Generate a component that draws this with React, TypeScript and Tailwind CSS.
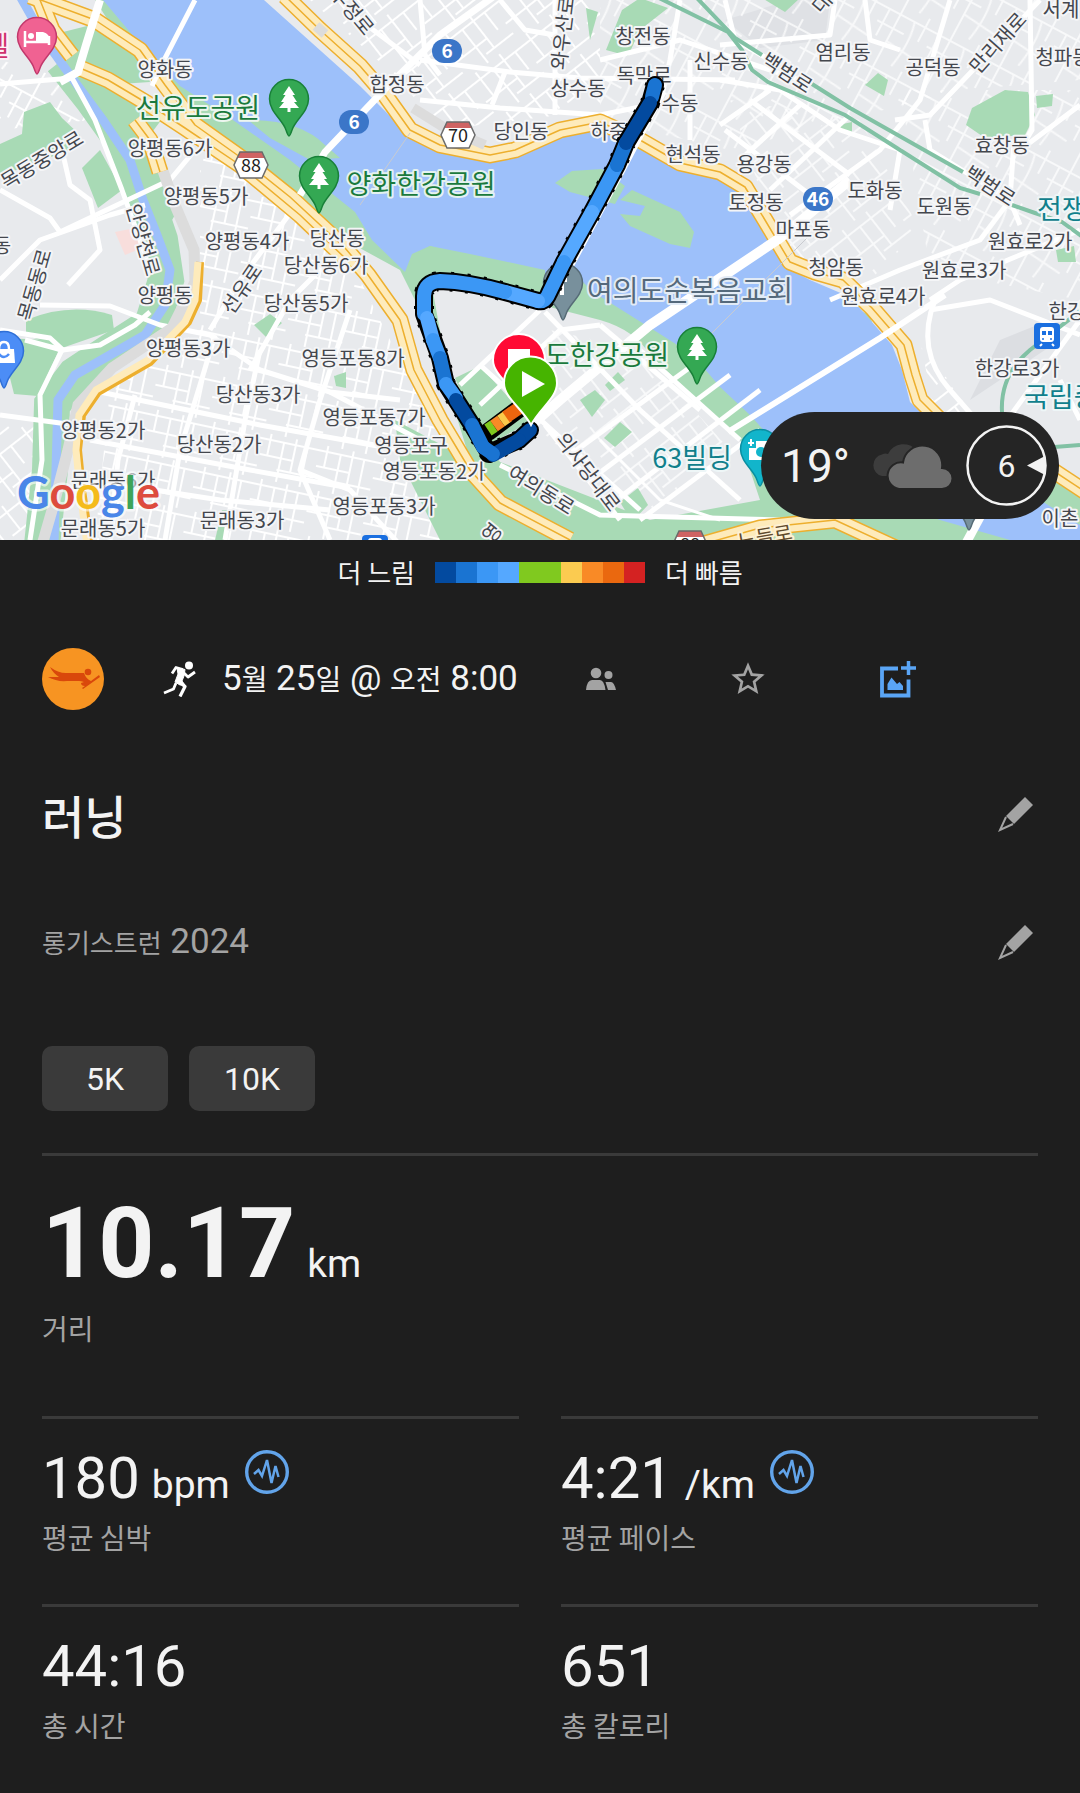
import React from 'react';
import { MdStarBorder } from 'react-icons/md';

type Label = { text: string; x: number; y: number; rotate?: number };

const DISTRICTS: Label[] = [
  { text: '양화동', x: 165, y: 77 },
  { text: '양평동6가', x: 170, y: 156 },
  { text: '양평동5가', x: 206, y: 204 },
  { text: '양평동4가', x: 247, y: 249 },
  { text: '당산동', x: 337, y: 246 },
  { text: '당산동6가', x: 326, y: 273 },
  { text: '양평동', x: 165, y: 303 },
  { text: '양평동3가', x: 188, y: 356 },
  { text: '당산동5가', x: 306, y: 311 },
  { text: '당산동3가', x: 258, y: 402 },
  { text: '영등포동8가', x: 353, y: 366 },
  { text: '양평동2가', x: 103, y: 438 },
  { text: '당산동2가', x: 219, y: 452 },
  { text: '문래동6가', x: 113, y: 488 },
  { text: '문래동5가', x: 103, y: 536 },
  { text: '문래동3가', x: 242, y: 528 },
  { text: '영등포동7가', x: 374, y: 425 },
  { text: '영등포구', x: 411, y: 453 },
  { text: '영등포동2가', x: 434, y: 479 },
  { text: '영등포동3가', x: 384, y: 514 },
  { text: '합정동', x: 397, y: 92 },
  { text: '당인동', x: 521, y: 139 },
  { text: '상수동', x: 578, y: 96 },
  { text: '창전동', x: 643, y: 44 },
  { text: '독막로', x: 644, y: 83 },
  { text: '수동', x: 680, y: 111 },
  { text: '하중', x: 609, y: 139 },
  { text: '현석동', x: 693, y: 162 },
  { text: '신수동', x: 721, y: 69 },
  { text: '염리동', x: 843, y: 60 },
  { text: '공덕동', x: 933, y: 75 },
  { text: '서계', x: 1061, y: 17 },
  { text: '청파동', x: 1063, y: 65 },
  { text: '효창동', x: 1002, y: 153 },
  { text: '용강동', x: 764, y: 172 },
  { text: '토정동', x: 756, y: 210 },
  { text: '마포동', x: 803, y: 237 },
  { text: '도화동', x: 875, y: 198 },
  { text: '도원동', x: 944, y: 214 },
  { text: '청암동', x: 836, y: 275 },
  { text: '원효로2가', x: 1030, y: 249 },
  { text: '원효로3가', x: 964, y: 278 },
  { text: '원효로4가', x: 883, y: 304 },
  { text: '한강', x: 1067, y: 319 },
  { text: '한강로3가', x: 1017, y: 376 },
  { text: '이촌', x: 1060, y: 526 },
  { text: '동', x: 2, y: 253 },
  { text: '목동중앙로', x: 42, y: 167, rotate: -31 },
  { text: '안양천로', x: 143, y: 247, rotate: 74 },
  { text: '목동동로', x: 35, y: 292, rotate: -74 },
  { text: '선유로', x: 242, y: 296, rotate: -56 },
  { text: '우정로', x: 352, y: 18, rotate: 50 },
  { text: '와우산로', x: 563, y: 40, rotate: -83 },
  { text: '백범로', x: 787, y: 80, rotate: 33 },
  { text: '백범로', x: 990, y: 193, rotate: 33 },
  { text: '만리재로', x: 998, y: 50, rotate: -48 },
  { text: '의사당대로', x: 588, y: 479, rotate: 53 },
  { text: '여의동로', x: 541, y: 497, rotate: 32 },
  { text: '대', x: 822, y: 10, rotate: -50 },
  { text: '영', x: 492, y: 540, rotate: -50 },
];

const ROUTE: { d: string; color: string }[] = [
  { d: 'M530 430L519 440', color: '#034a9f' },
  { d: 'M519 440L493 455', color: '#034a9f' },
  { d: 'M655 85L652 97', color: '#1a74d2' },
  { d: 'M617 165L592 212', color: '#3b97f5' },
  { d: 'M592 212L564 262', color: '#55a8ff' },
  { d: 'M564 262L549 293Q545 303 538 301', color: '#3b97f5' },
  { d: 'M626 143L617 165', color: '#1a74d2' },
  { d: 'M650 103L626 143', color: '#034a9f' },
  { d: 'M538 301L505 292', color: '#55a8ff' },
  { d: 'M505 292Q470 282 440 281Q424 282 424 296V314', color: '#3b97f5' },
  { d: 'M427 318L433 340', color: '#55a8ff' },
  { d: 'M433 340L440 358', color: '#3b97f5' },
  { d: 'M440 358L446 384', color: '#1a74d2' },
  { d: 'M446 384L456 398', color: '#3b97f5' },
  { d: 'M456 400L472 425', color: '#034a9f' },
  { d: 'M472 425L483 447', color: '#1a74d2' },
  { d: 'M483 447L493 454', color: '#1a74d2' },
];

const ROUTE_LINE =
  'M655 85L650 103L626 143L617 165L592 212L564 262L549 293Q545 303 538 301L505 292Q470 282 440 281Q424 282 424 296V314L440 358L446 384L472 425L489 453L519 440L530 430';

const HIGHWAYS = [
  'M30 -4L95 20L140 50L165 85L195 125L240 157L290 197L345 248L368 275L400 320L414 370L440 420L470 470L500 503L570 540',
  'M80 68L108 80L150 105L185 128L240 165L300 215L345 258',
  'M135 120L150 140L160 172',
  'M285 -4L320 30L360 66L385 95L410 130L440 145L490 155L515 150L560 130L600 122L640 140L680 163L720 172L745 187L765 220L790 262L815 272L843 280L872 308L904 345L912 375L920 400L950 430',
  'M40 0L52 30L72 56',
  'M1040 462L1090 495',
  'M700 545L760 528L835 520L900 550',
];

const STREETS = [
  'M0 84L72 78L95 120L122 190L140 240L150 270',
  'M0 190L50 218L60 232L170 180L195 150',
  'M0 280L40 240L110 215L145 205',
  'M62 150L70 185L90 200L100 250L68 285',
  'M0 330L50 338L63 350L100 345L135 325L150 312',
  'M25 340L62 350L40 395L42 460L30 540',
  'M40 305L110 306L160 325L210 335L260 370L330 392L400 400',
  'M0 415L75 425',
  'M100 392L260 425L400 450',
  'M90 440L250 470L350 488',
  'M90 480L220 500L330 510',
  'M215 335L200 385L180 450L165 540',
  'M350 310L320 400L300 470L330 540',
  'M260 350L245 420L225 540',
  'M210 330L240 280L300 200',
  'M250 370L290 300L350 240',
  'M135 395L118 460L110 540',
  'M300 470L350 490L400 545',
  'M330 392L420 440',
  'M340 0L360 20L420 65',
  'M420 60L510 72L580 78L735 80',
  'M420 100L500 108L600 115L650 105',
  'M505 72L492 105',
  'M420 0L425 55L440 75',
  'M500 0L525 30L555 35',
  'M555 0L555 115',
  'M680 0L670 60L662 95',
  'M600 60L680 40L800 80',
  'M690 60V140',
  'M720 45L830 35L835 0',
  'M720 80L780 90L840 130L900 150L890 210',
  'M720 125L770 90',
  'M740 160L800 105',
  'M770 190L850 115',
  'M790 215L880 150L920 100L950 0',
  'M725 130L830 210',
  'M750 100L850 175',
  'M895 120L930 115L1040 0',
  'M925 120L930 150L1010 200L1020 225',
  'M865 0L870 40L900 50',
  'M1030 0L1032 130L1020 150L1080 105',
  'M1014 140L1010 200L980 240L900 270L830 300',
  'M930 300L960 280L1080 230',
  'M930 310L990 300L1080 335',
  'M935 300Q915 350 950 390L985 430',
  'M1080 320L1000 430',
  'M1060 380L1080 420',
  'M725 0L735 40L770 60',
];

const YEOUIDO = [
  'M460 385L540 310',
  'M480 405L560 330L600 325',
  'M570 455L700 360',
  'M590 480L730 375',
  'M610 505L760 390',
  'M640 520L760 430',
  'M480 365L640 510',
  'M545 312L640 410L740 500',
  'M600 325L700 410',
  'M640 350L740 440',
  'M500 465L600 515L780 520',
  'M545 425L620 520',
];

const PARKS = [
  'M55 34L95 24L140 55L150 82L120 84L80 58Z',
  'M24 112L50 102L62 118L80 135L70 150L0 176V144L22 134Z',
  'M82 168L100 150L122 190L98 208Z',
  'M26 320Q70 302 112 315L114 330L62 348L26 335Z',
  'M0 338L50 340L58 352L38 396L14 394Z',
  'M254 325L270 314L282 323L266 337Z',
  'M606 50L622 10L640 -2L668 8L640 30L628 56Z',
  'M586 8L598 12L590 40Z',
  'M966 125L972 108L1005 90L1028 92L1035 115L1025 135L985 138Z',
  'M865 85L878 73L888 80L884 96Z',
  'M1036 96L1053 94L1052 106L1037 108Z',
  'M838 125L852 122L852 134L840 132Z',
  'M762 -2L800 -2L785 12Z',
  'M215 540L222 510L228 510L224 540Z',
  'M334 376L346 372L346 388L336 386Z',
  'M1056 250L1074 246L1076 262L1058 262Z',
];

const YEOUIDO_PARKS = [
  'M455 378L480 366L520 410L495 430L475 425Z',
  'M492 428L520 412L530 422L490 444Z',
  'M580 400L595 390L605 400L592 417Z',
  'M604 438L620 422L632 432L615 447Z',
  'M620 502L638 488L648 505L632 522Z',
  'M605 385L618 372L625 380L610 391Z',
];

/** Map label with the usual white halo */
const MapText = ({
  label,
  className = 'text-[20px] fill-[#44474e] stroke-[#f4f5f7]',
  anchor = 'middle',
}: {
  label: Label;
  className?: string;
  anchor?: 'start' | 'middle' | 'end';
}) => (
  <text
    x={label.x}
    y={label.y}
    textAnchor={anchor}
    transform={label.rotate ? `rotate(${label.rotate} ${label.x} ${label.y - 7})` : undefined}
    paintOrder="stroke"
    strokeWidth="4"
    strokeLinejoin="round"
    className={className}
  >
    {label.text}
  </text>
);

const PlacePin = ({
  x,
  y,
  fill,
  stroke,
  children,
}: {
  x: number;
  y: number;
  fill: string;
  stroke: string;
  children?: React.ReactNode;
}) => (
  <g transform={`translate(${x} ${y})`}>
    <path
      d="M0 37C-1 37 -2 34 -3 31C-6 21 -19.500 13 -19.500 0A19.500 19.500 0 0 1 19.500 0C19.500 13 6 21 3 31C2 34 1 37 0 37Z"
      fill={fill}
      stroke={stroke}
      strokeWidth="1.500"
    />
    {children}
  </g>
);

const TreePin = ({ x, y }: { x: number; y: number }) => (
  <PlacePin x={x} y={y} fill="#34a853" stroke="#188038">
    <path d="M0 -13L6 -4H3.500L8 3H5L10 9H1.500V13H-1.500V9H-10L-5 3H-8L-3.500 -4H-6Z" fill="#fff" />
  </PlacePin>
);

const RoundShield = ({ x, y, text }: Label) => (
  <g>
    <rect x={x - 15} y={y - 12} width="30" height="24" rx="12" fill="#3b76c8" />
    <text x={x} y={y + 7} textAnchor="middle" className="fill-white text-[19px] font-bold">
      {text}
    </text>
  </g>
);

const HexShield = ({ x, y, text }: Label) => (
  <g transform={`translate(${x} ${y})`}>
    <path d="M-11 -13H11L17 0L11 13H-11L-17 0Z" fill="#fff" />
    <path d="M-11 -13H11L14 -7H-14Z" fill="#cf6363" />
    <path d="M-11 -13H11L17 0L11 13H-11L-17 0Z" fill="none" stroke="#6b6b6b" strokeWidth="1.500" />
    <text y="7" textAnchor="middle" className="fill-[#222] text-[18px]">
      {text}
    </text>
  </g>
);

const RouteMap = () => (
  <svg
    viewBox="0 0 1080 540"
    role="img"
    aria-label="러닝 경로"
    className="block w-full font-['Noto_Sans_CJK_KR',sans-serif]"
  >
    <defs>
      <pattern id="blocksA" width="58" height="46" patternUnits="userSpaceOnUse" patternTransform="rotate(12)">
        <path d="M0 6H58M0 22H34M20 34H58M8 0V22M22 6V46M34 0V34M46 6V46" stroke="#fff" strokeWidth="2" fill="none" />
      </pattern>
      <pattern id="blocksB" width="64" height="50" patternUnits="userSpaceOnUse" patternTransform="rotate(-38)">
        <path d="M0 8H64M0 30H40M30 42H64M10 0V30M26 8V50M40 0V42M54 8V30" stroke="#fff" strokeWidth="2" fill="none" />
      </pattern>
      <pattern id="blocksC" width="56" height="60" patternUnits="userSpaceOnUse" patternTransform="rotate(28)">
        <path d="M0 10H56M0 26H30M18 40L56 44M6 10V40M18 0V60M34 10Q40 30 34 60M46 0V26" stroke="#fff" strokeWidth="2" fill="none" />
      </pattern>
    </defs>

    <rect width="1080" height="540" fill="#e8eaed" />
    <path d="M725 20L790 0H830L825 40L760 48Z" fill="#dfe1e5" />
    <path d="M1000 340L1050 320L1060 340L970 400Z" fill="#dcdee2" />
    <path d="M115 232L135 228L142 248L125 255Z" fill="#f8dedc" />

    {/* Side streets */}
    <path d="M200 140L350 260L440 440L470 540H95L110 390L200 330Z" fill="url(#blocksA)" />
    <path d="M0 60L70 80L90 120L0 130Z" fill="url(#blocksC)" />
    <path d="M0 420H40V540H0Z" fill="url(#blocksB)" />
    <path d="M310 0H600V110L440 130L400 80Z" fill="url(#blocksB)" />
    <path d="M600 0H1080V80L960 90L730 150L600 120Z" fill="url(#blocksC)" opacity="0.7" />
    <path d="M730 100L860 120L920 230L860 290L780 250Z" fill="url(#blocksB)" opacity="0.7" />
    <path d="M900 90H1080V300L930 270Z" fill="url(#blocksC)" opacity="0.7" />
    <path d="M920 340L990 440H940Z" fill="url(#blocksB)" />

    {/* Parks */}
    {PARKS.map((d) => (
      <path key={d} d={d} fill="#a8dab5" />
    ))}

    {/* Stream on the west side */}
    <path
      d="M62 60L92 98L122 140L145 195L160 240L166 280L152 325L110 352L75 375L52 405L50 470L42 545"
      fill="none"
      stroke="#a8dab5"
      strokeWidth="36"
    />
    <path d="M120 75L165 115L150 135L175 215L160 240L130 150L90 90Z" fill="#a8dab5" />
    <path
      d="M20 -4L45 40L75 82L103 120L130 160L143 200L157 235L170 270L165 305L145 335L110 355L75 375L58 400L56 470L54 545"
      fill="none"
      stroke="#9dc0fa"
      strokeWidth="9"
    />

    {/* River banks and the river */}
    <path
      d="M95 0H262L360 90L410 140L520 165L600 130L720 185L800 285L870 315L900 420L1080 490V540H440L400 460L395 420L470 460L430 330L400 270L345 240L230 150L140 70Z"
      fill="#a8dab5"
    />
    <path
      d="M103 0H264L360 86L382 108L412 138L430 146L480 158L512 156L560 134L600 128L640 150L690 172L720 177L740 192L765 232L785 267L810 280L850 297L892 345L902 370L910 402L960 450L1080 525V540H1010L940 520L800 470L750 415L720 387L693 355L660 334L593 292L573 272L545 276L450 252L430 246L412 254L405 272L372 240L355 212L290 160L230 118L180 86L145 50Z"
      fill="#9dc0fa"
    />
    <path
      d="M430 276Q470 282 538 304L600 320Q635 330 650 355L740 440L760 500L650 520L500 462L450 385Z"
      fill="#e8eaed"
    />
    <path d="M550 330L640 350L730 450L640 520L540 430Z" fill="url(#blocksB)" opacity="0.7" />
    {YEOUIDO_PARKS.map((d) => (
      <path key={d} d={d} fill="#a8dab5" />
    ))}
    <path d="M248 120Q300 120 325 145L340 158L310 160L270 138Z" fill="#a8dab5" />
    <path d="M555 183L572 171L602 169L625 186L615 204L570 192Z" fill="#a8dab5" />
    <path d="M620 200L632 190L680 212L694 232L690 248L670 244L630 226L620 214L640 216L645 206Z" fill="#a8dab5" />
    <path d="M413 255L430 246L470 254L545 270L545 292L470 272L430 270Z" fill="#a8dab5" />
    <path d="M600 440L660 500L720 520" fill="none" stroke="#fff" strokeWidth="3" />

    {/* Local roads */}
    <g fill="none" stroke="#fff" strokeWidth="5" strokeLinejoin="round">
      {STREETS.map((d) => (
        <path key={d} d={d} />
      ))}
      {YEOUIDO.map((d) => (
        <path key={d} d={d} />
      ))}
    </g>

    {/* Expressway along the stream */}
    <path
      d="M162 168L175 205L194 250L195 282L172 328L112 368L78 405L68 450L55 500L42 545"
      fill="none"
      stroke="#dcdcdc"
      strokeWidth="11"
    />
    <path
      d="M200 262L198 300L188 322L150 362L98 392L82 415L78 450L82 490L90 545"
      fill="none"
      stroke="#edaf2e"
      strokeWidth="8"
    />
    <path
      d="M198 262L195 300L185 322L148 360L96 390L79 415L76 450L80 490L87 545"
      fill="none"
      stroke="#feebbb"
      strokeWidth="7"
    />

    {/* Riverside highways */}
    <g fill="none" strokeLinejoin="round">
      {HIGHWAYS.map((d) => (
        <path key={d} d={d} stroke="#edaf2e" strokeWidth="17" />
      ))}
      {HIGHWAYS.map((d) => (
        <path key={d} d={d} stroke="#feebbb" strokeWidth="14" />
      ))}
      {HIGHWAYS.map((d) => (
        <path key={d} d={d} stroke="#edaf2e" strokeWidth="1.500" />
      ))}
      <path d="M316 26L325 34M413 108L445 128L485 145" stroke="#dcdcdc" strokeWidth="10" />
    </g>

    {/* Bridges */}
    <g fill="none" stroke="#fff">
      <path d="M100 0L86 45L78 72L60 82" strokeWidth="8" />
      <path d="M195 0L163 62L152 86" strokeWidth="5" />
      <path d="M500 -8L440 35L384 90L325 152L300 195" strokeWidth="7" />
      <path d="M660 90L618 170L575 250L545 305" strokeWidth="14" />
      <path d="M850 180L780 238L650 325L560 400L528 428" strokeWidth="10" />
      <path d="M728 432L880 338L945 295" strokeWidth="6" />
      <path d="M1000 480L965 545" strokeWidth="9" />
      <path d="M410 133L360 205M810 235L700 345" stroke="#c9cbd0" strokeWidth="1" />
    </g>

    {/* Railways */}
    <g fill="none" stroke="#81c1a4" strokeWidth="4">
      <path d="M695 -4L735 38L762 55M812 84L850 108L963 172M1012 205L1035 213L1062 222L1084 238" />
      <path d="M655 -4L728 32L742 50L752 70L768 82L845 115L900 150L960 188L980 194" />
      <path d="M1084 308L1030 350Q1000 375 1002 412L1015 450L1080 445" />
    </g>

    {DISTRICTS.map((label) => (
      <MapText key={`${label.text}-${label.x}`} label={label} />
    ))}
    <MapText
      label={{ text: '노들로', x: 765, y: 544, rotate: -10 }}
      className="text-[20px] fill-[#5f4a2c] stroke-[#fdf1d3]"
    />

    <MapText
      label={{ text: '선유도공원', x: 198, y: 118 }}
      className="text-[27px] fill-[#1a7a3d] stroke-[#edf6f0]"
    />
    <MapText
      label={{ text: '양화한강공원', x: 421, y: 194 }}
      className="text-[27px] fill-[#1a7a3d] stroke-[#e4f2f0]"
    />
    <MapText
      label={{ text: '도한강공원', x: 669, y: 365 }}
      anchor="end"
      className="text-[27px] fill-[#1a7a3d] stroke-[#edf6f0]"
    />
    <PlacePin x={563} y={283} fill="#78909c" stroke="#566b76">
      <path d="M-1 -8V12M-6 -3H4" stroke="#fff" strokeWidth="4" />
    </PlacePin>
    <MapText
      label={{ text: '여의도순복음교회', x: 690, y: 301 }}
      className="text-[28px] fill-[#55697b] stroke-[#e2ebf6]"
    />
    <MapText
      label={{ text: '63빌딩', x: 692, y: 468 }}
      className="text-[27px] fill-[#10808c] stroke-[#eef6f7]"
    />
    <MapText
      label={{ text: '전쟁', x: 1037, y: 219 }}
      anchor="start"
      className="text-[27px] fill-[#10808c] stroke-[#eef6f7]"
    />
    <MapText
      label={{ text: '국립중', x: 1024, y: 407 }}
      anchor="start"
      className="text-[27px] fill-[#10808c] stroke-[#eef6f7]"
    />
    <MapText
      label={{ text: '텔', x: 9, y: 56 }}
      anchor="end"
      className="text-[27px] fill-[#d0326e] stroke-[#fdf0f5]"
    />

    <TreePin x={289} y={99} />
    <TreePin x={319} y={176} />
    <TreePin x={697} y={347} />
    <PlacePin x={37} y={37} fill="#f06292" stroke="#c2386c">
      <path d="M-12 -6V10M-12 5H13M12 8V-1" stroke="#fff" strokeWidth="2.500" />
      <circle cx="-6" cy="-1" r="3" fill="#fff" />
      <path d="M-1 4V-5H6Q13 -3 13 4Z" fill="#fff" />
    </PlacePin>
    <PlacePin x={4} y={351} fill="#4c8df6" stroke="#2f6fd6">
      <path d="M-10 -2H10L11 12H-11Z" fill="#fff" />
      <path d="M-5 -2Q-5 -9 0 -9T5 -2" fill="none" stroke="#fff" strokeWidth="2.500" />
      <path d="M-5 3Q0 9 5 3" fill="none" stroke="#4c8df6" strokeWidth="2.500" />
    </PlacePin>
    <PlacePin x={760} y={449} fill="#12b5cb" stroke="#0b8fa1">
      <path d="M-11 -1H-4V-8H10V11H-11Z" fill="#fff" />
      <circle cx="1" cy="3" r="5" fill="#12b5cb" />
      <path d="M-9 -10V-3M-12 -6H-6" stroke="#fff" strokeWidth="2" />
    </PlacePin>
    <PlacePin x={969} y={493} fill="#78909c" stroke="#566b76" />

    <RoundShield text="6" x={447} y={51} />
    <RoundShield text="6" x={354} y={122} />
    <RoundShield text="46" x={818} y={199} />
    <HexShield text="88" x={251} y={165} />
    <HexShield text="70" x={458} y={135} />
    <HexShield text="88" x={690} y={544} />

    {/* Stations */}
    <g>
      <rect x="1034" y="323" width="26" height="26" rx="4" fill="#1a6fe0" />
      <rect x="1040" y="327" width="14" height="15" rx="3" fill="#fff" />
      <path d="M1042 331H1046V335H1042ZM1048 331H1052V335H1048Z" fill="#1a6fe0" />
      <circle cx="1043" cy="339" r="1" fill="#1a6fe0" />
      <circle cx="1051" cy="339" r="1" fill="#1a6fe0" />
      <path d="M1042 344L1040 346M1052 344L1054 346" stroke="#fff" strokeWidth="2" />
      <rect x="362" y="535" width="26" height="26" rx="4" fill="#1a6fe0" />
      <rect x="368" y="538" width="14" height="12" rx="3" fill="#fff" />
    </g>

    {/* Recorded track, coloured by pace */}
    <g fill="none" strokeLinecap="round" strokeLinejoin="round">
      <path d="M488 432L520 408" stroke="#000" strokeWidth="18" />
      <path d={ROUTE_LINE} stroke="#000" strokeWidth="18" />
      <path d={ROUTE_LINE} stroke="#000" strokeWidth="20" strokeDasharray="3 13" strokeLinecap="butt" />
      <path d="M488 430L494 426" stroke="#7ec91e" strokeWidth="13" strokeLinecap="butt" />
      <path d="M494 426L501 421" stroke="#f98a26" strokeWidth="13" strokeLinecap="butt" />
      <path d="M501 421L508 416" stroke="#fbc94a" strokeWidth="13" strokeLinecap="butt" />
      <path d="M506 417L522 406" stroke="#ec650e" strokeWidth="13" strokeLinecap="butt" />
      {ROUTE.map((segment) => (
        <path key={segment.d} d={segment.d} stroke={segment.color} strokeWidth="14" />
      ))}
    </g>

    {/* Finish and start */}
    <path
      d="M519 400C510 384 493 374 493 360A26 26 0 0 1 545 360C545 374 528 384 519 400Z"
      fill="#ff0a34"
      stroke="#fff"
      strokeWidth="2"
    />
    <path d="M508 349H530V371H508Z" fill="#fff" />
    <path
      d="M531 425C522 408 504 398 504 383A26.500 26.500 0 0 1 557 383C557 398 540 408 531 425Z"
      fill="#46b400"
      stroke="#fff"
      strokeWidth="2"
    />
    <path d="M522 371L545 384L522 397Z" fill="#fff" />

    <text
      x="17"
      y="509"
      paintOrder="stroke"
      strokeWidth="5"
      strokeLinejoin="round"
      className="stroke-white/60 font-['Lato',sans-serif] text-[45px] font-bold"
    >
      <tspan fill="#4a86e8">G</tspan>
      <tspan fill="#dd4b3e">o</tspan>
      <tspan fill="#f4bb1b">o</tspan>
      <tspan fill="#4a86e8">g</tspan>
      <tspan fill="#3da45a">l</tspan>
      <tspan fill="#dd4b3e">e</tspan>
    </text>
  </svg>
);

const WeatherBadge = () => (
  <div className="absolute right-[21px] bottom-[21px] flex h-[107px] items-center rounded-full bg-[#252525] pr-3 pl-5 text-[#f3f3f3]">
    <span className="text-[46px] leading-none">19°</span>
    <svg viewBox="0 0 84 46" className="ml-5 h-[46px] w-[84px]">
      <path
        d="M12 33A11 11 0 0 1 12 11.500Q15 10 18 11A17 17 0 0 1 47 8L40 33Z"
        fill="#3d3d3d"
      />
      <path
        d="M29 46A13 13 0 1 1 33 19.500A19.500 19.500 0 0 1 72 25A10.500 10.500 0 0 1 72 46Z"
        fill="#6d6d6d"
        stroke="#252525"
        strokeWidth="2"
      />
    </svg>
    <div className="relative ml-3 flex size-[81px] items-center justify-center">
      <svg viewBox="0 0 81 81" className="absolute inset-0">
        <circle cx="40.500" cy="40.500" r="39" fill="none" stroke="#f3f3f3" strokeWidth="2.500" />
        <path d="M61 40.500L79 31V50Z" fill="#f3f3f3" />
      </svg>
      <span className="text-[32px] leading-none">6</span>
    </div>
  </div>
);

const PaceLegend = () => (
  <div className="flex items-center justify-center gap-5 pt-3">
    <span className="font-['Noto_Sans_CJK_KR',sans-serif] text-[26px] leading-10">더 느림</span>
    <div className="flex h-[21px] *:w-[21px]">
      <span className="bg-[#034a9f]" />
      <span className="bg-[#1a74d2]" />
      <span className="bg-[#3b97f5]" />
      <span className="bg-[#55a8ff]" />
      <span className="bg-[#80c91f]" />
      <span className="bg-[#80c91f]" />
      <span className="bg-[#fbcb50]" />
      <span className="bg-[#f98a26]" />
      <span className="bg-[#ea680f]" />
      <span className="bg-[#d42222]" />
    </div>
    <span className="font-['Noto_Sans_CJK_KR',sans-serif] text-[26px] leading-10">더 빠름</span>
  </div>
);

const Avatar = () => (
  <svg viewBox="0 0 62 62" className="size-[62px]" role="img" aria-label="프로필">
    <circle cx="31" cy="31" r="31" fill="#f79422" />
    <g fill="#d9480b">
      <circle cx="46" cy="24" r="3.300" />
      <path d="M8 19Q16 25 24 25H42Q44 31 49 33L57 27L58 29L41 41L40 40L43 38Q39 38 39 35L42 34Q39 33 37 33H25Q15 34 6 29L17 29Q11 25 8 19Z" />
    </g>
  </svg>
);

const RunnerIcon = () => (
  <svg viewBox="0 0 33 36" className="h-9 w-[33px]" fill="none" stroke="#fff" strokeLinejoin="round">
    <circle cx="26" cy="4.500" r="4" fill="#fff" stroke="none" />
    <path d="M20 8.500L13 6.500L9 12.500" strokeWidth="2.800" />
    <path d="M14 7L22 8.500L21 15L19 20L22 24L17 24L12 21L15 13Z" fill="#fff" strokeWidth="1" />
    <path d="M20 11L25 16L32 11" strokeWidth="2.800" />
    <path d="M15 20L22 25.500L17 35.500" strokeWidth="3.200" />
    <path d="M13 22L10.500 28L1 32" strokeWidth="2.800" />
  </svg>
);

const PeopleIcon = () => (
  <svg viewBox="0 0 30 24" className="h-6 w-[30px]" fill="#a3a3a3">
    <circle cx="10" cy="6" r="5.300" />
    <circle cx="22.500" cy="8" r="4" />
    <path d="M0 23Q1 13 6 13H14Q18 13 19.500 23Z" />
    <path d="M19.500 15H25Q28 15 30 23H22Z" />
  </svg>
);

const AddPhotoIcon = () => (
  <svg viewBox="0 0 36 37" className="h-[37px] w-9" fill="none" stroke="#5aa5f5">
    <path d="M18 7.500H2V34.500H28.500V18.500" strokeWidth="3.800" />
    <path d="M28.500 0V14M21 7H36" strokeWidth="3.500" />
    <path d="M7.500 29V23L11.500 16.500L17 23L19.500 21L23 25V29Z" fill="#5aa5f5" stroke="none" />
  </svg>
);

const EditIcon = () => (
  <svg viewBox="0 0 36 36" className="size-9" fill="#a3a3a3">
    <path d="M27 1L35 9L16 28L8 20Z" />
    <path d="M8 21L2 34L15 28" fill="none" stroke="#a3a3a3" strokeWidth="2" />
  </svg>
);

const ChartIcon = () => (
  <svg viewBox="-22 -23 44 46" className="h-[46px] w-11" fill="none" stroke="#62a4ea">
    <circle r="20.300" strokeWidth="3.400" />
    <path d="M-13 2L-8.500 -2L-5 4L0 -12L4.500 11L8.500 -6L11.500 5" strokeWidth="2.500" />
  </svg>
);

interface StatProps {
  value: string;
  label: string;
  unit?: string;
  chart?: boolean;
}

const Stat = ({ value, label, unit, chart }: StatProps) => (
  <div className="border-t-3 border-[#3a3a3a] pt-6">
    <div className="flex h-[70px] items-start gap-[15px]">
      <p className="text-[58px] leading-[70px]">
        {value}
        {unit && <span className="ml-3 text-[39px] leading-none">{unit}</span>}
      </p>
      {chart && (
        <button type="button" aria-label={`${label} 차트`} className="pt-1.5">
          <ChartIcon />
        </button>
      )}
    </div>
    <p className="mt-1 font-['Noto_Sans_CJK_KR',sans-serif] text-[28px] leading-10 text-[#a3a3a3]">{label}</p>
  </div>
);

export default function App() {
  return (
    <div className="min-h-screen bg-[#1e1e1e] font-['Roboto','Noto_Sans_CJK_KR',sans-serif] text-[#f3f3f3]">
      {/* Map */}
      <section className="relative overflow-hidden">
        <RouteMap />
        <WeatherBadge />
      </section>

      <PaceLegend />

      <main className="px-[42px] pt-14">
        {/* Activity header */}
        <header className="flex items-center">
          <Avatar />
          <span className="ml-[59px]">
            <RunnerIcon />
          </span>
          <time className="ml-[26px] text-[35px] leading-[48px] whitespace-nowrap">
            5<span className="text-[28px] leading-none">월</span> 25
            <span className="text-[28px] leading-none">일</span> @{' '}
            <span className="text-[28px] leading-none">오전</span> 8:00
          </time>
          <div className="ml-[68px] flex items-center gap-28">
            <button type="button" aria-label="공개 범위">
              <PeopleIcon />
            </button>
            <button type="button" aria-label="즐겨찾기">
              <MdStarBorder className="size-10 text-[#a3a3a3]" />
            </button>
            <button type="button" aria-label="사진 추가">
              <AddPhotoIcon />
            </button>
          </div>
        </header>

        {/* Title and event name */}
        <div className="mt-[68px] flex h-[72px] items-center justify-between pr-1">
          <h1 className="font-['Noto_Sans_CJK_KR',sans-serif] text-[46px] leading-[64px] font-medium">러닝</h1>
          <button type="button" aria-label="제목 편집">
            <EditIcon />
          </button>
        </div>
        <div className="mt-14 flex h-[72px] items-center justify-between pr-1 text-[#a3a3a3]">
          <p className="text-[35px] leading-[48px]">
            <span className="text-[26px] leading-none">롱기스트런</span> 2024
          </p>
          <button type="button" aria-label="이름 편집">
            <EditIcon />
          </button>
        </div>

        {/* Distance tags */}
        <div className="mt-[68px] flex gap-[21px]">
          <button type="button" className="h-[65px] w-[126px] rounded-[10px] bg-[#3a3a3a] text-[32px]">
            5K
          </button>
          <button type="button" className="h-[65px] w-[126px] rounded-[10px] bg-[#3a3a3a] text-[32px]">
            10K
          </button>
        </div>

        {/* Distance */}
        <div className="mt-[42px] border-t-3 border-[#3a3a3a] pt-8">
          <p className="text-[98px] leading-[112px] font-bold">
            10.17<span className="ml-3 text-[39px] leading-none font-normal">km</span>
          </p>
          <p className="mt-2 font-['Noto_Sans_CJK_KR',sans-serif] text-[28px] leading-10 text-[#a3a3a3]">거리</p>
        </div>

        <div className="mt-[68px] grid grid-cols-2 gap-x-[42px] gap-y-[47px] pb-8">
          <Stat value="180" unit="bpm" label="평균 심박" chart />
          <Stat value="4:21" unit="/km" label="평균 페이스" chart />
          <Stat value="44:16" label="총 시간" />
          <Stat value="651" label="총 칼로리" />
        </div>
      </main>
    </div>
  );
}
